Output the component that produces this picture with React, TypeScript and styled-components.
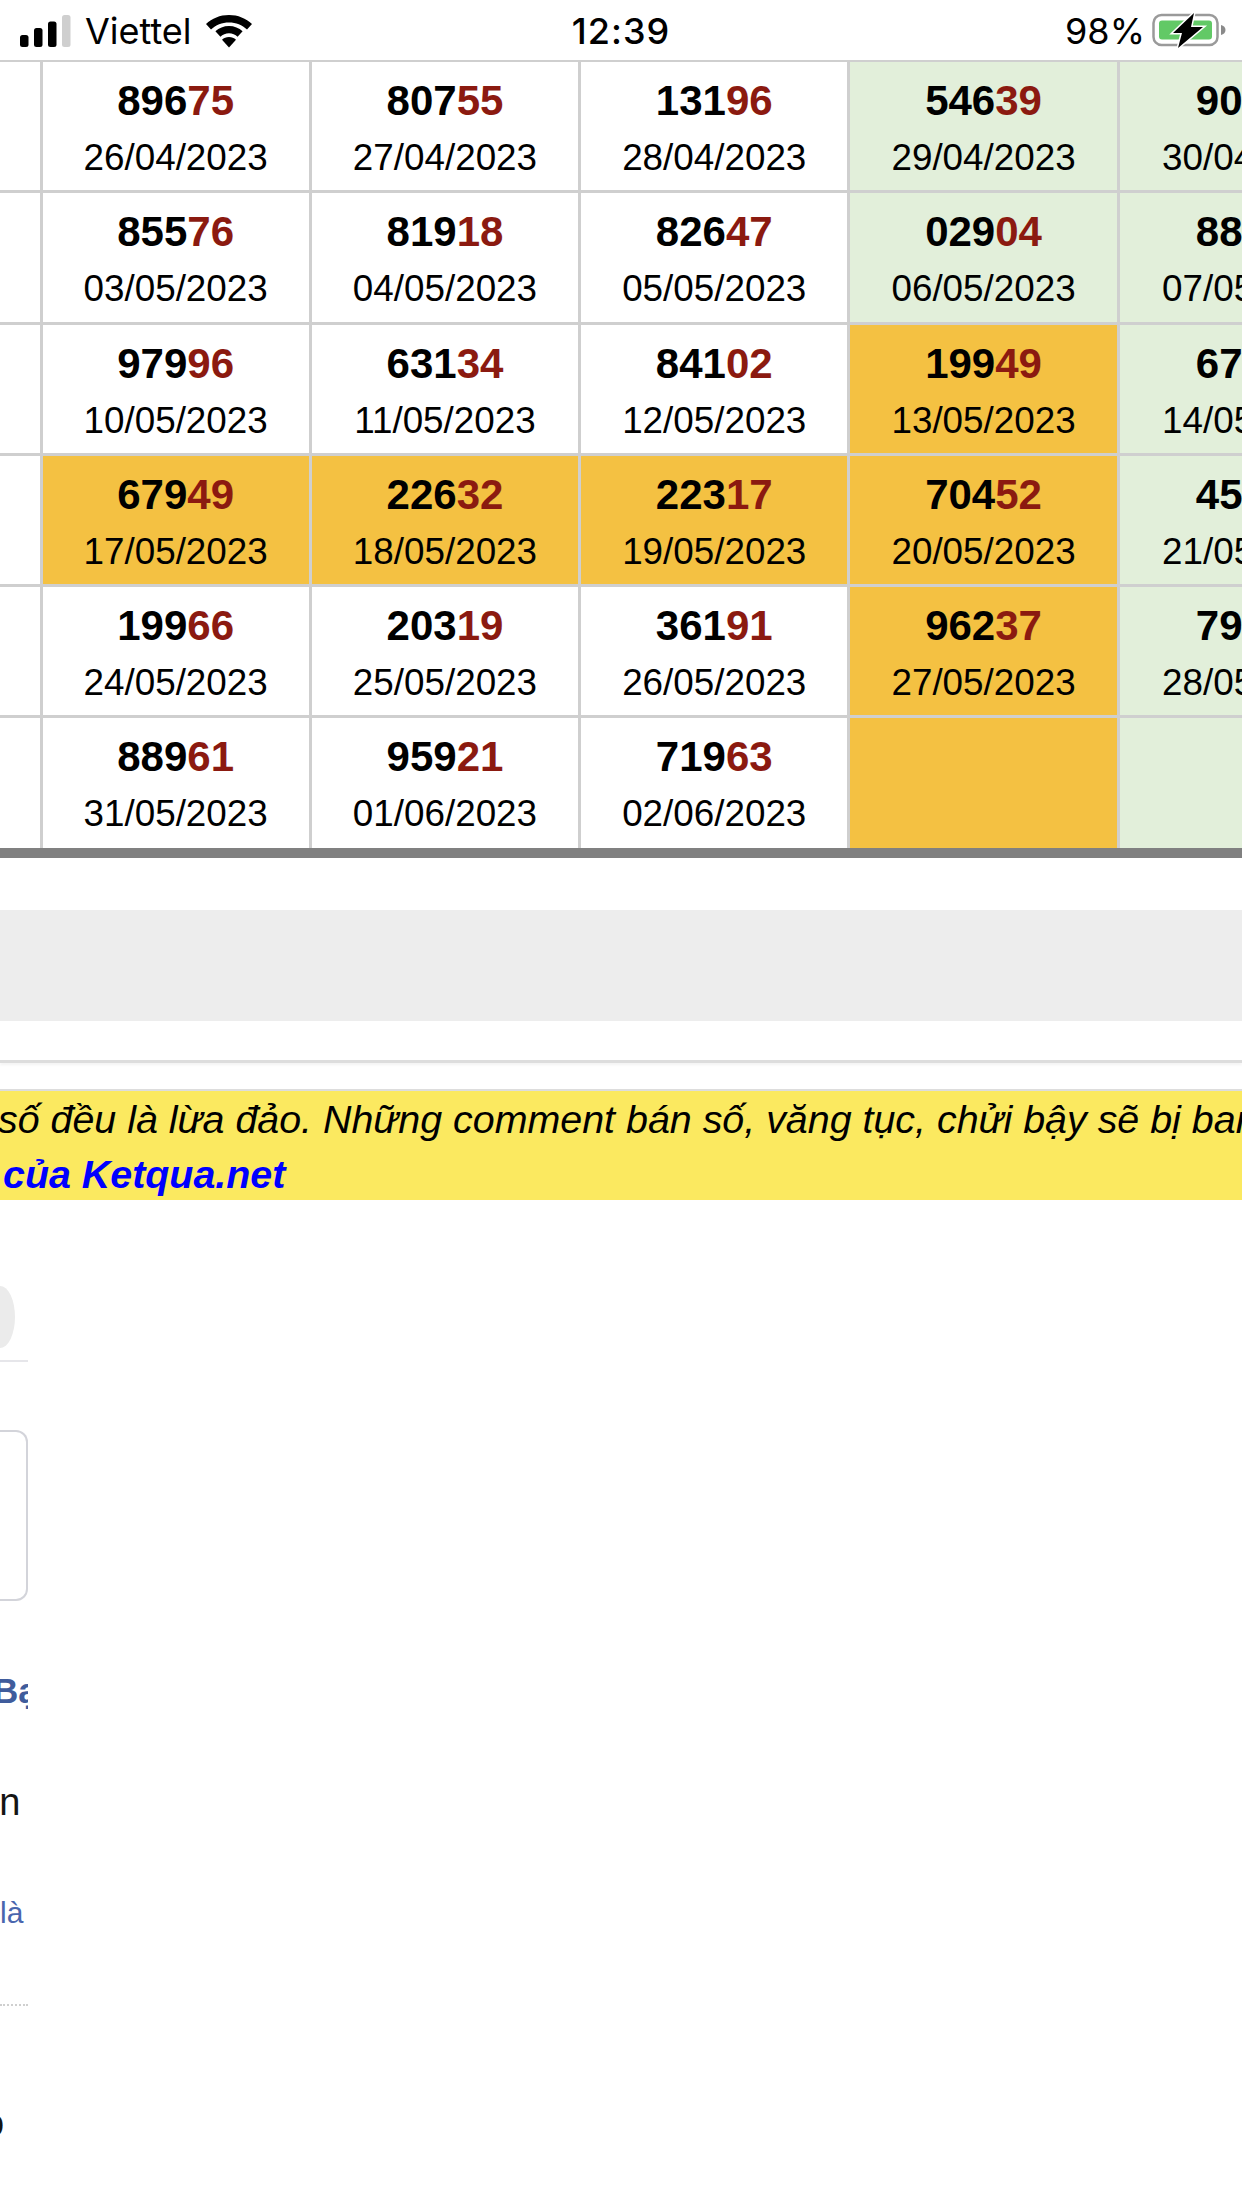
import React from 'react';
import styled, { createGlobalStyle } from 'styled-components';

const Global = createGlobalStyle`
  html, body { margin: 0; padding: 0; background: #fff; }
  body { font-family: "Liberation Sans", Arial, sans-serif; }
`;

const Page = styled.div`
  width: 1242px;
  height: 2208px;
  overflow: hidden;
  background: #fff;
  color: #000;
`;

const StatusBar = styled.div`
  height: 60px;
  display: grid;
  grid-template-columns: 1fr auto 1fr;
  align-items: center;
  padding: 2px 14px 0 20px;
  font-family: Inter, "Liberation Sans", sans-serif;
  font-size: 36px;
  box-sizing: border-box;
`;

const StatusLeft = styled.div`
  display: flex;
  align-items: center;
  gap: 13px;
`;

const StatusRight = styled.div`
  display: flex;
  align-items: center;
  justify-content: flex-end;
  gap: 7px;
`;

const Time = styled.div`
  font-weight: 500;
  letter-spacing: 1px;
  margin-right: 6px;
`;

const WifiSlot = styled.span`
  display: flex;
  margin-left: 1px;
`;

const Grid = styled.div`
  display: grid;
  grid-template-columns: 42.5px repeat(4, 269.3px) 200px;
  grid-template-rows: repeat(5, 131.3px) 129.5px;
  border-top: 2px solid #cfcfcf;
  border-bottom: 10px solid #808080;
  width: 1242px;
  overflow: hidden;
`;

const Cell = styled.div<{ $tone?: 'green' | 'orange' }>`
  box-sizing: border-box;
  border-right: 3px solid #cfcfcf;
  border-bottom: 3px solid #cfcfcf;
  background: ${p => (p.$tone === 'green' ? '#e2efda' : p.$tone === 'orange' ? '#f4c142' : '#fff')};
  text-align: center;
  overflow: hidden;
  white-space: nowrap;
  min-width: 0;
  &:nth-last-child(-n + 6) { border-bottom: 0; }
`;

const Num = styled.div`
  font-size: 42px;
  font-weight: 700;
  line-height: 48px;
  margin-top: 15px;
`;

const Tail = styled.span`
  color: #8b1a10;
`;

const DateText = styled.div`
  font-size: 36.8px;
  line-height: 42px;
  margin-top: 12px;
`;

const ClippedCell = styled(Cell)`
  width: 269px;
  border-right: 0;
`;

const GrayBand = styled.div`
  height: 111px;
  margin-top: 52px;
  background: #ededed;
`;

const Rule = styled.div`
  height: 3px;
  margin-top: 39px;
  background: #dddddd;
  box-shadow: 0 2px 3px #f2f2f2;
`;

const Notice = styled.div`
  margin-top: 26px;
  height: 111px;
  box-sizing: border-box;
  border-top: 2px solid #dddddd;
  padding-top: 1px;
  background: #fbe960;
  font-size: 39.4px;
  line-height: 55px;
  font-style: italic;
  white-space: nowrap;
  overflow: hidden;
  text-indent: -2px;
`;

const NoticeLink = styled.div`
  color: #0000ff;
  font-weight: 700;
  padding-left: 5px;
`;

const AvatarEdge = styled.div`
  width: 15px;
  height: 62px;
  margin-top: 86px;
  border-radius: 0 100% 100% 0 / 0 50% 50% 0;
  background: #ebebeb;
`;

const Divider = styled.div`
  width: 28px;
  height: 2px;
  margin-top: 12px;
  background: #e6e6ea;
`;

const InputEdge = styled.div`
  box-sizing: border-box;
  width: 28px;
  height: 171px;
  margin-top: 68px;
  border: 2px solid #d3d4da;
  border-left: 0;
  border-radius: 0 12px 12px 0;
`;

const Frag = styled.div`
  width: 28px;
  overflow: hidden;
  white-space: nowrap;
`;

const NameFrag = styled(Frag)`
  margin-top: 70px;
  color: #3f5c9c;
  font-size: 35px;
  line-height: 40px;
  font-weight: 700;
  text-indent: -7px;
`;

const BodyFrag = styled(Frag)`
  margin-top: 69px;
  color: #141414;
  font-size: 38px;
  line-height: 44px;
  text-indent: -22px;
`;

const LinkFrag = styled(Frag)`
  margin-top: 72px;
  color: #4a66ae;
  font-size: 30px;
  line-height: 34px;
`;

const DottedRule = styled.div`
  width: 28px;
  margin-top: 74px;
  border-top: 2px dotted #cfcfcf;
`;

const LastFrag = styled(Frag)`
  margin-top: 95px;
  color: #141414;
  font-size: 38px;
  line-height: 44px;
  text-indent: -17px;
`;

const SignalIcon = () => (
  <svg width="52" height="34" viewBox="0 0 52 34">
    <rect x="0" y="21" width="8.500" height="12" rx="2.500" fill="#000" />
    <rect x="14" y="14" width="8.500" height="19" rx="2.500" fill="#000" />
    <rect x="28" y="7.500" width="8.500" height="25.500" rx="2.500" fill="#000" />
    <rect x="42" y="1" width="8.500" height="32" rx="2.500" fill="#cfcfcf" />
  </svg>
);

const WifiIcon = () => (
  <svg width="46" height="33" viewBox="0 0 46 33">
    <path d="M23 0C14 0 6 3.400 0 9l5 5.500C9.800 10 16 7.500 23 7.500s13.200 2.500 18 7l5-5.500C40 3.400 32 0 23 0z" fill="#000" />
    <path d="M23 11c-5.300 0-10 2-13.600 5.300l5 5.500c2.300-2.200 5.300-3.500 8.600-3.500s6.300 1.300 8.600 3.500l5-5.500C33 13 28.300 11 23 11z" fill="#000" />
    <path d="M23 22c-2.700 0-5.200 1-7 2.800L23 32.500l7-7.700C28.200 23 25.700 22 23 22z" fill="#000" />
  </svg>
);

const BatteryIcon = () => (
  <svg width="76" height="36" viewBox="0 0 76 36">
    <rect x="1.500" y="2" width="64" height="30" rx="8" fill="none" stroke="#9a9a9a" strokeWidth="2.500" />
    <rect x="7" y="7.500" width="53" height="19" rx="3" fill="#62c966" />
    <path d="M69 12c2.800.6 4.500 2.500 4.500 5s-1.700 4.400-4.500 5z" fill="#8a8a8a" />
    <path d="M42 0 21 20h9l-4 15 25-21H39z" fill="#000" stroke="#fff" strokeWidth="3" paintOrder="stroke" />
  </svg>
);

type Item = { n?: string; d?: string; tone?: 'green' | 'orange' };

const rows: Item[][] = [
  [{ n: '89675', d: '26/04/2023' }, { n: '80755', d: '27/04/2023' }, { n: '13196', d: '28/04/2023' }, { n: '54639', d: '29/04/2023', tone: 'green' }, { n: '90512', d: '30/04/2023', tone: 'green' }],
  [{ n: '85576', d: '03/05/2023' }, { n: '81918', d: '04/05/2023' }, { n: '82647', d: '05/05/2023' }, { n: '02904', d: '06/05/2023', tone: 'green' }, { n: '88310', d: '07/05/2023', tone: 'green' }],
  [{ n: '97996', d: '10/05/2023' }, { n: '63134', d: '11/05/2023' }, { n: '84102', d: '12/05/2023' }, { n: '19949', d: '13/05/2023', tone: 'orange' }, { n: '67125', d: '14/05/2023', tone: 'green' }],
  [{ n: '67949', d: '17/05/2023', tone: 'orange' }, { n: '22632', d: '18/05/2023', tone: 'orange' }, { n: '22317', d: '19/05/2023', tone: 'orange' }, { n: '70452', d: '20/05/2023', tone: 'orange' }, { n: '45168', d: '21/05/2023', tone: 'green' }],
  [{ n: '19966', d: '24/05/2023' }, { n: '20319', d: '25/05/2023' }, { n: '36191', d: '26/05/2023' }, { n: '96237', d: '27/05/2023', tone: 'orange' }, { n: '79253', d: '28/05/2023', tone: 'green' }],
  [{ n: '88961', d: '31/05/2023' }, { n: '95921', d: '01/06/2023' }, { n: '71963', d: '02/06/2023' }, { tone: 'orange' }, { tone: 'green' }],
];

const Content = ({ item }: { item: Item }) =>
  item.n ? (
    <>
      <Num>
        {item.n.slice(0, 3)}
        <Tail>{item.n.slice(3)}</Tail>
      </Num>
      <DateText>{item.d}</DateText>
    </>
  ) : null;

export default function App() {
  return (
    <Page>
      <Global />
      <StatusBar>
        <StatusLeft>
          <SignalIcon />
          <span>Viettel</span>
          <WifiSlot>
            <WifiIcon />
          </WifiSlot>
        </StatusLeft>
        <Time>12:39</Time>
        <StatusRight>
          <span>98%</span>
          <BatteryIcon />
        </StatusRight>
      </StatusBar>
      <Grid>
        {rows.map((row, r) => (
          <React.Fragment key={r}>
            <Cell />
            {row.map((item, c) =>
              c === 4 ? (
                <ClippedCell key={c} $tone={item.tone}>
                  <Content item={item} />
                </ClippedCell>
              ) : (
                <Cell key={c} $tone={item.tone}>
                  <Content item={item} />
                </Cell>
              ),
            )}
          </React.Fragment>
        ))}
      </Grid>
      <GrayBand />
      <Rule />
      <Notice>
        <div>số đều là lừa đảo. Những comment bán số, văng tục, chửi bậy sẽ bị ban</div>
        <NoticeLink>của Ketqua.net</NoticeLink>
      </Notice>
      <AvatarEdge />
      <Divider />
      <InputEdge />
      <NameFrag>Bạn</NameFrag>
      <BodyFrag>an</BodyFrag>
      <LinkFrag>là</LinkFrag>
      <DottedRule />
      <LastFrag>o</LastFrag>
    </Page>
  );
}
